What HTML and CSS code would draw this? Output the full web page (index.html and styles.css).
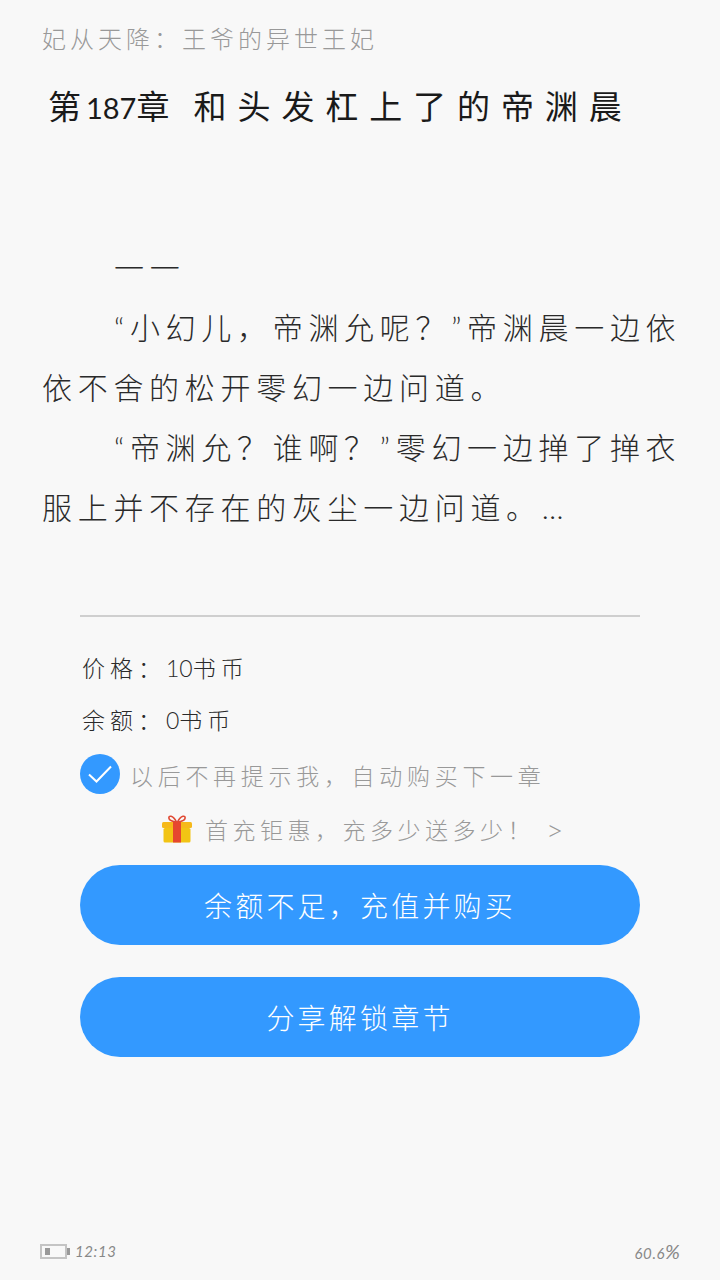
FILE: index.html
```html
<!DOCTYPE html>
<html lang="zh-CN">
<head>
<meta charset="utf-8">
<title>第187章</title>
<link rel="stylesheet" href="styles.css">
</head>
<body>
<main class="page">
  <header class="head">
    <div class="book">妃从天降：王爷的异世王妃</div>
    <h1 class="chapter"><span class="chapter-first">第</span><span class="chapter-num">187</span>章 和头发杠上了的帝渊晨</h1>
  </header>
  <section class="content">
    <p class="para">一一</p>
    <p class="para">“小幻儿，帝渊允呢？”帝渊晨一边依依不舍的松开零幻一边问道。</p>
    <p class="para">“帝渊允？谁啊？”零幻一边掸了掸衣服上并不存在的灰尘一边问道。…</p>
  </section>
  <section class="buy">
    <div class="info">价格：<span class="num">10</span>书币</div>
    <div class="info">余额：<span class="num">0</span>书币</div>
    <label class="auto">
      <svg class="check" width="40" height="40" viewBox="0 0 40 40"><circle cx="20" cy="20" r="20" fill="#3399ff"/><path d="M9 20.500l7.500 7L31 12.500" fill="none" stroke="#fff" stroke-width="2"/></svg>
      <span>以后不再提示我，自动购买下一章</span>
    </label>
    <div class="promo">
      <svg class="gift" width="30" height="30" viewBox="0 0 30 30">
        <path d="M14.500 8C11 1 6 1 7 4.500c.5 2 4 3 7.500 3.500zM15.500 8C19 1 24 1 23 4.500c-.5 2-4 3-7.500 3.500z" fill="none" stroke="#e04a34" stroke-width="1.600"/>
        <rect x="0" y="8" width="30" height="6" rx="1.500" fill="#f6b91a"/>
        <rect x="1.500" y="14" width="27" height="14.500" rx="1.500" fill="#f2c414"/>
        <rect x="11" y="8" width="8" height="20.500" fill="#e6472f"/>
      </svg>
      <span>首充钜惠，充多少送多少！</span>
      <span class="arrow">&gt;</span>
    </div>
    <button class="btn btn-first" type="button">余额不足，充值并购买</button>
    <button class="btn btn-second" type="button">分享解锁章节</button>
  </section>
  <footer class="status">
    <div class="status-left">
      <span class="battery"><span class="battery-level"></span></span>
      <span class="time">12:13</span>
    </div>
    <span class="percent">60.6<span class="percent-sign">%</span></span>
  </footer>
</main>
</body>
</html>
```
FILE: styles.css
```css
* { box-sizing: border-box; }
html, body { margin: 0; padding: 0; }
body {
  background: #f8f8f8;
  font-family: Lato, "Noto Sans CJK SC", sans-serif;
  font-weight: 300;
}
.page {
  width: 720px;
  height: 1280px;
  display: flex;
  flex-direction: column;
  overflow: hidden;
}
.head { padding: 22px 0 0 42px; }
.book {
  font-size: 24px;
  line-height: 34px;
  letter-spacing: 4px;
  color: #999;
}
.chapter {
  margin: 26px 0 0 6px;
  font-size: 33px;
  font-weight: 400;
  line-height: 48px;
  letter-spacing: 10.900px;
  word-spacing: -6px;
  color: #1a1a1a;
  white-space: nowrap;
}
.chapter-first { letter-spacing: 4.900px; }
.chapter-num {
  font-size: 29px;
  letter-spacing: 0;
}
.content {
  margin-top: 105px;
  padding: 0 30px 0 42px;
  font-size: 30px;
  line-height: 60px;
  letter-spacing: 5.700px;
  color: #2a2a2a;
}
.para { margin: 0; text-indent: 72px; }
.buy {
  margin: 78px 80px 0;
  border-top: 2px solid #cfcfcf;
  display: flex;
  flex-direction: column;
}
.info {
  margin: 38px 0 0 2px;
  height: 26px;
  font-size: 23px;
  line-height: 26px;
  letter-spacing: 5px;
  color: #2a2a2a;
}
.info + .info { margin-top: 26px; }
.num { letter-spacing: 0; }
.auto {
  margin-top: 21px;
  display: flex;
  align-items: center;
  gap: 10px;
  font-size: 23px;
  letter-spacing: 4.700px;
  color: #999;
}
.auto span { position: relative; top: 1px; }
.promo {
  margin-top: 19px;
  height: 32px;
  padding-left: 82px;
  display: flex;
  align-items: center;
  gap: 13px;
  font-size: 23px;
  letter-spacing: 4.500px;
  color: #999;
  white-space: nowrap;
}
.arrow { margin-left: -2px; font-size: 30px; letter-spacing: 0; }
.btn {
  display: block;
  width: 560px;
  height: 80px;
  border: 0;
  border-radius: 40px;
  background: #3399ff;
  color: #fff;
  font-family: inherit;
  font-weight: 300;
  font-size: 28px;
  letter-spacing: 3.200px;
}
.btn-first { margin-top: 20px; }
.btn-second { margin-top: 32px; }
.status {
  margin-top: auto;
  padding: 0 40px 17px;
  display: flex;
  justify-content: space-between;
  align-items: center;
  color: #888;
  font-size: 15px;
  font-style: italic;
  font-weight: 400;
  letter-spacing: 0.600px;
}
.status-left { display: flex; align-items: center; gap: 8px; }
.percent-sign { font-size: 20px; letter-spacing: 0; }
.battery {
  position: relative;
  display: block;
  width: 27px;
  height: 15px;
  border: 2px solid #c4c4c4;
  padding: 2px 3px;
}
.battery::after {
  content: "";
  position: absolute;
  right: -5px;
  top: 2px;
  width: 3px;
  height: 7px;
  background: #999;
}
.battery-level { display: block; width: 5px; height: 7px; background: #999; }
```
